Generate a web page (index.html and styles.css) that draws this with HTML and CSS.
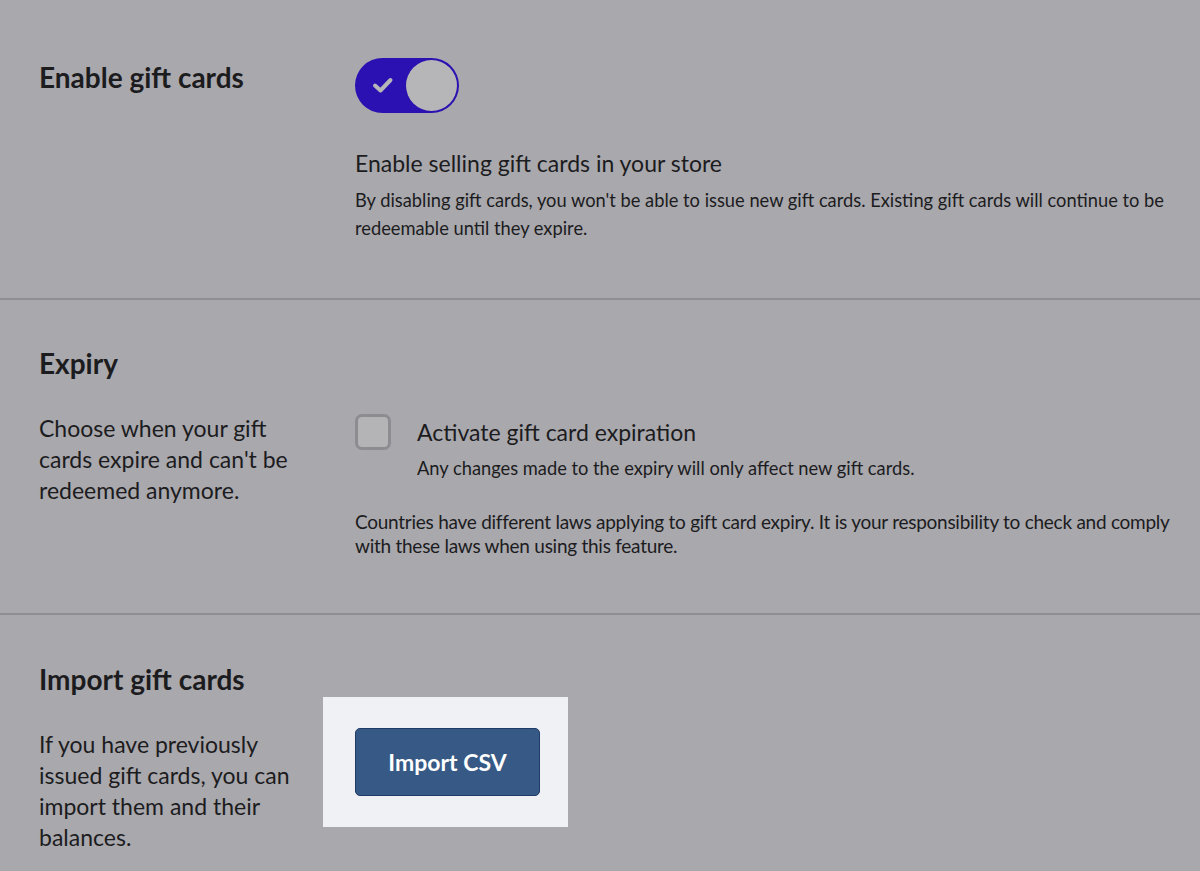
FILE: index.html
```html
<!DOCTYPE html>
<html lang="en">
<head>
<meta charset="utf-8">
<title>Gift cards settings</title>
<link rel="stylesheet" href="styles.css">
</head>
<body>
<main class="page">
  <section class="section section-enable">
    <div class="col-left">
      <h2 class="title">Enable gift cards</h2>
    </div>
    <div class="col-right">
      <button class="toggle" type="button" aria-pressed="true" aria-label="Enable gift cards">
        <svg class="toggle-check" width="22" height="18" viewBox="0 0 22 18"><path d="M3 9.5 L8.5 14.5 L18.5 4" fill="none" stroke="#b6b5b8" stroke-width="4" stroke-linecap="round" stroke-linejoin="round"/></svg>
        <span class="toggle-knob"></span>
      </button>
      <p class="option-label option-label-enable">Enable selling gift cards in your store</p>
      <p class="help help-enable">By disabling gift cards, you won't be able to issue new gift cards. Existing gift cards will continue to be redeemable until they expire.</p>
    </div>
  </section>

  <section class="section section-expiry">
    <div class="col-left">
      <h2 class="title">Expiry</h2>
      <p class="lead">Choose when your gift cards expire and can't be redeemed anymore.</p>
    </div>
    <div class="col-right col-right-expiry">
      <div class="check-row">
        <span class="checkbox"></span>
        <div class="check-text">
          <p class="option-label">Activate gift card expiration</p>
          <p class="help help-small">Any changes made to the expiry will only affect new gift cards.</p>
        </div>
      </div>
      <p class="help help-laws">Countries have different laws applying to gift card expiry. It is your responsibility to check and comply with these laws when using this feature.</p>
    </div>
  </section>

  <section class="section section-import">
    <div class="col-left">
      <h2 class="title">Import gift cards</h2>
      <p class="lead">If you have previously issued gift cards, you can import them and their balances.</p>
    </div>
    <div class="col-right col-right-import">
      <div class="highlight">
        <button class="btn-primary" type="button">Import CSV</button>
      </div>
    </div>
  </section>
</main>
</body>
</html>
```

FILE: styles.css
```css
* { box-sizing: border-box; }
html, body {
  margin: 0;
  padding: 0;
  background: #a9a8ad;
}
body {
  font-family: Lato, "Open Sans", "Liberation Sans", sans-serif;
  color: #1c1c1e;
  width: 1200px;
  height: 871px;
  overflow: hidden;
}
p, h2 { margin: 0; }

.page { display: flex; flex-direction: column; }

.section {
  display: grid;
  grid-template-columns: 316px 1fr;
  padding-left: 39px;
  padding-right: 20px;
  border-bottom: 2px solid #8f8e93;
}
.section-enable { height: 300px; padding-top: 58px; }
.section-expiry { height: 315px; padding-top: 47px; }
.section-import { padding-top: 48px; border-bottom: none; }

.title {
  font-size: 28px;
  font-weight: 700;
  line-height: 32px;
}
.section-enable .title { margin-top: 3px; }

.lead {
  font-size: 23px;
  line-height: 31px;
  margin-top: 34px;
  width: 270px;
}

.toggle {
  width: 104px;
  height: 55px;
  border-radius: 28px;
  background: #2b11b1;
  border: 0;
  padding: 0;
  position: relative;
  display: block;
  cursor: pointer;
}
.toggle-check {
  position: absolute;
  left: 17px;
  top: 18px;
}
.toggle-knob {
  position: absolute;
  right: 2px;
  top: 2px;
  width: 51px;
  height: 51px;
  border-radius: 50%;
  background: #b6b5b8;
}

.option-label {
  font-size: 23px;
  line-height: 28px;
}
.option-label-enable { margin-top: 36px; }

.help {
  font-size: 18.3px;
  line-height: 28px;
}
.help-enable { margin-top: 9px; }

.col-right-expiry { padding-top: 67px; }
.check-row {
  display: flex;
  gap: 26px;
  align-items: flex-start;
}
.checkbox {
  flex: none;
  width: 36px;
  height: 36px;
  border: 3px solid #8d8c91;
  border-radius: 7px;
  background: #b4b4b7;
}
.check-text .option-label {
  font-size: 23px;
  line-height: 30px;
  margin-top: 3px;
}
.help-small {
  line-height: 24px;
  margin-top: 9px;
}
.help-laws {
  font-size: 19px;
  line-height: 24px;
  margin-top: 30px;
  letter-spacing: -0.26px;
}

.col-right-import { padding-top: 34px; }
.highlight {
  display: inline-block;
  margin-left: -32px;
  background: #f0f1f5;
  padding: 31px 28px 31px 32px;
}
.btn-primary {
  display: block;
  width: 185px;
  height: 68px;
  background: #365a85;
  border: 1px solid #1e3c66;
  border-radius: 5px;
  color: #ffffff;
  font-family: Lato, "Open Sans", "Liberation Sans", sans-serif;
  font-size: 23px;
  font-weight: 700;
  cursor: pointer;
}
```
